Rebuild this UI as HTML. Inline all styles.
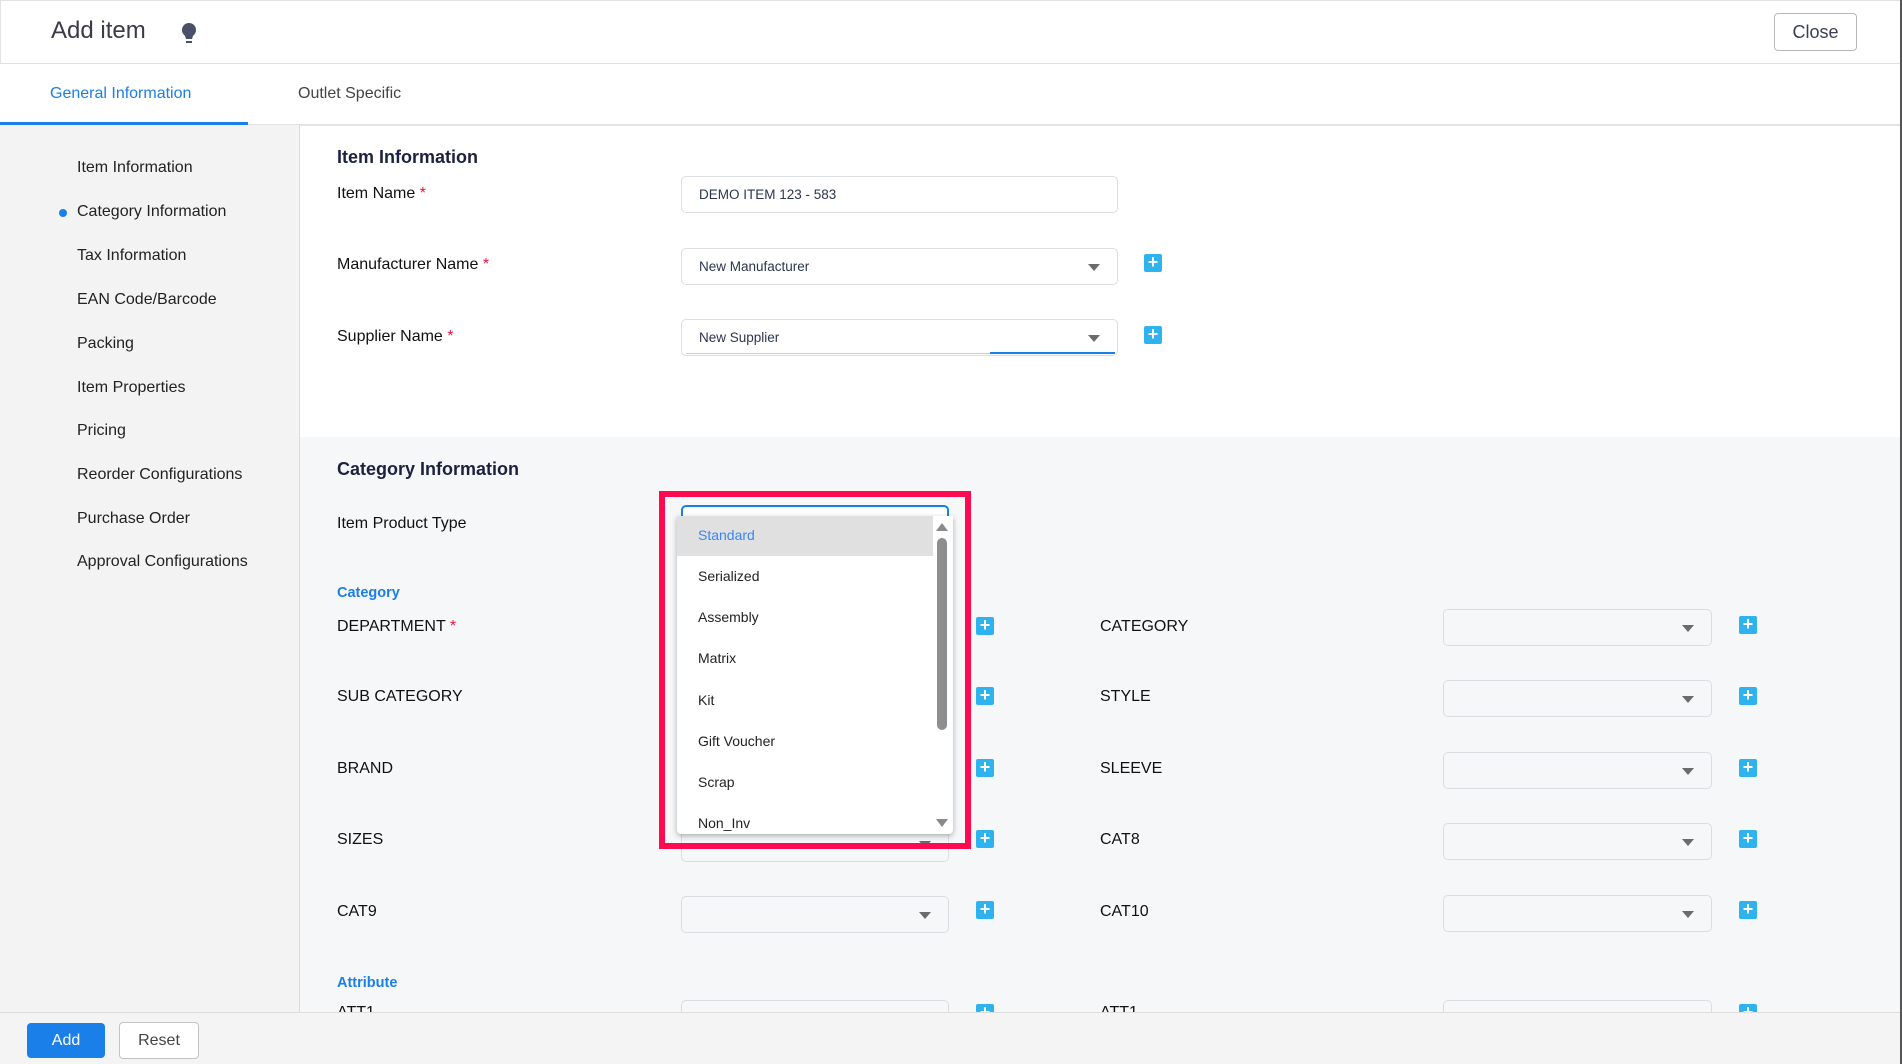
<!DOCTYPE html>
<html><head><meta charset="utf-8"><style>
*{margin:0;padding:0;box-sizing:border-box}
body{width:1902px;height:1064px;position:relative;overflow:hidden;background:#fff;font-family:"Liberation Sans",Arial,sans-serif;color:#1d1d2b}
.a{position:absolute}
.side{left:0;top:125px;width:300px;height:888px;background:#f3f3f3;border-right:1px solid #dcdcdc}
.side div{position:absolute;left:77px;font-size:16px;color:#222}
.lbl{position:absolute;left:337px;font-size:16px;color:#111}
.star{color:#e8143c}
.inp{position:absolute;background:#fff;border:1px solid #dcdde0;border-radius:5px;height:37px;font-size:13.5px;color:#2c3550;padding-left:17px;line-height:35px}
.sel{position:absolute;border:1px solid #dcdde0;border-radius:5px;height:37px;background:#f6f7f9}
.sel:after,.inp.dd:after{content:"";position:absolute;right:17px;top:15px;border-left:6px solid transparent;border-right:6px solid transparent;border-top:7px solid #6b6b6b}
.plus{position:absolute;width:18px;height:18px;background:#2fb3ee;border-radius:2px;color:#fff;font-size:18px;line-height:17px;text-align:center;font-weight:bold}
.rl{position:absolute;left:1100px;font-size:16px;color:#111}
.opt{position:absolute;left:21px;font-size:14px;color:#222}
</style></head><body>
<div class="a" style="left:0;top:0;width:1902px;height:64px;border:1px solid #e3e3e3;border-bottom:1px solid #e0e0e0"></div>
<div class="a" style="left:51px;top:17px;font-size:24px;color:#3a3a48">Add item</div>
<svg class="a" style="left:180px;top:22px" width="18" height="24" viewBox="0 0 18 24"><circle cx="9" cy="8" r="7" fill="#4a5068"/><path d="M4 11 L6 17 H12 L14 11Z" fill="#4a5068"/><rect x="6" y="19" width="6" height="2" fill="#4a5068"/></svg>
<div class="a" style="left:1774px;top:13px;width:83px;height:38px;border:1px solid #b9b9b9;border-radius:4px;font-size:18px;color:#3a3f55;text-align:center;line-height:36px">Close</div>
<div class="a" style="left:1900px;top:0;width:2px;height:1064px;background:#555"></div>
<div class="a" style="left:0;top:124px;width:1900px;height:2px;background:#e3e3e3"></div>
<div class="a" style="left:50px;top:85px;font-size:16px;color:#1a7fe8">General Information</div>
<div class="a" style="left:298px;top:85px;font-size:16px;color:#444">Outlet Specific</div>
<div class="a" style="left:0;top:122px;width:248px;height:3px;background:#1a7fe8"></div>
<div class="a side">
<div style="top:34px">Item Information</div>
<div style="top:78px">Category Information</div>
<div style="top:122px">Tax Information</div>
<div style="top:166px">EAN Code/Barcode</div>
<div style="top:210px">Packing</div>
<div style="top:254px">Item Properties</div>
<div style="top:297px">Pricing</div>
<div style="top:341px">Reorder Configurations</div>
<div style="top:385px">Purchase Order</div>
<div style="top:428px">Approval Configurations</div>
<span style="position:absolute;left:59px;top:84px;width:8px;height:8px;border-radius:50%;background:#1a7fe8"></span>
</div>
<div class="a" style="left:300px;top:437px;width:1600px;height:576px;background:#f6f7f9"></div>
<div class="a" style="left:337px;top:147px;font-size:18px;font-weight:bold;color:#1c2140">Item Information</div>
<div class="lbl" style="top:185px">Item Name <span class="star">*</span></div>
<div class="lbl" style="top:256px">Manufacturer Name <span class="star">*</span></div>
<div class="lbl" style="top:328px">Supplier Name <span class="star">*</span></div>
<div class="inp" style="left:681px;top:176px;width:437px">DEMO ITEM 123 - 583</div>
<div class="inp dd" style="left:681px;top:248px;width:437px">New Manufacturer</div>
<div class="inp dd" style="left:681px;top:319px;width:437px">New Supplier<span style="position:absolute;left:4px;right:2px;bottom:1px;height:1px;background:#a8d8f5"></span><span style="position:absolute;left:308px;right:2px;bottom:1px;height:2px;background:#1a7fe8"></span></div>
<div class="plus" style="left:1144px;top:254px">+</div>
<div class="plus" style="left:1144px;top:326px">+</div>
<div class="a" style="left:337px;top:459px;font-size:18px;font-weight:bold;color:#1c2140">Category Information</div>
<div class="lbl" style="top:515px">Item Product Type</div>
<div class="a" style="left:337px;top:585px;font-size:14.5px;font-weight:bold;color:#1a7fe8">Category</div>
<div class="lbl" style="top:618px">DEPARTMENT <span class="star">*</span></div>
<div class="lbl" style="top:688px">SUB CATEGORY</div>
<div class="lbl" style="top:760px">BRAND</div>
<div class="lbl" style="top:831px">SIZES</div>
<div class="lbl" style="top:903px">CAT9</div>
<div class="sel" style="left:681px;top:825px;width:268px"></div>
<div class="sel" style="left:681px;top:896px;width:268px"></div>
<div class="plus" style="left:976px;top:617px">+</div>
<div class="plus" style="left:976px;top:687px">+</div>
<div class="plus" style="left:976px;top:759px">+</div>
<div class="plus" style="left:976px;top:830px">+</div>
<div class="plus" style="left:976px;top:901px">+</div>
<div class="rl" style="top:618px">CATEGORY</div>
<div class="rl" style="top:688px">STYLE</div>
<div class="rl" style="top:760px">SLEEVE</div>
<div class="rl" style="top:831px">CAT8</div>
<div class="rl" style="top:903px">CAT10</div>
<div class="sel" style="left:1443px;top:609px;width:269px"></div>
<div class="sel" style="left:1443px;top:680px;width:269px"></div>
<div class="sel" style="left:1443px;top:752px;width:269px"></div>
<div class="sel" style="left:1443px;top:823px;width:269px"></div>
<div class="sel" style="left:1443px;top:895px;width:269px"></div>
<div class="plus" style="left:1739px;top:616px">+</div>
<div class="plus" style="left:1739px;top:687px">+</div>
<div class="plus" style="left:1739px;top:759px">+</div>
<div class="plus" style="left:1739px;top:830px">+</div>
<div class="plus" style="left:1739px;top:901px">+</div>
<div class="a" style="left:337px;top:975px;font-size:14.5px;font-weight:bold;color:#1a7fe8">Attribute</div>
<div class="lbl" style="top:1004px">ATT1</div>
<div class="rl" style="top:1004px">ATT1</div>
<div class="sel" style="left:681px;top:1000px;width:268px"></div>
<div class="sel" style="left:1443px;top:1000px;width:269px"></div>
<div class="plus" style="left:976px;top:1004px">+</div>
<div class="plus" style="left:1739px;top:1004px">+</div>
<div class="a" style="left:681px;top:505px;width:268px;height:30px;border:2px solid #1a7fe8;border-bottom:none;border-radius:5px 5px 0 0;background:#fff"></div>
<div class="a" style="left:677px;top:516px;width:276px;height:318px;background:#fff;box-shadow:0 2px 6px rgba(0,0,0,.3);border-radius:0 0 4px 4px;overflow:hidden">
<div class="a" style="left:0;top:0;width:256px;height:40px;background:#e0e0e0"></div>
<div class="opt" style="top:11px;color:#3b87f0">Standard</div>
<div class="opt" style="top:52px">Serialized</div>
<div class="opt" style="top:93px">Assembly</div>
<div class="opt" style="top:134px">Matrix</div>
<div class="opt" style="top:176px">Kit</div>
<div class="opt" style="top:217px">Gift Voucher</div>
<div class="opt" style="top:258px">Scrap</div>
<div class="opt" style="top:299px">Non_Inv</div>
<div class="a" style="left:259px;top:7px;border-left:6px solid transparent;border-right:6px solid transparent;border-bottom:8px solid #8a8a8a"></div>
<div class="a" style="left:260px;top:22px;width:10px;height:192px;border-radius:5px;background:#8e8e8e"></div>
<div class="a" style="left:259px;top:303px;border-left:6px solid transparent;border-right:6px solid transparent;border-top:8px solid #8a8a8a"></div>
</div>
<div class="a" style="left:659px;top:491px;width:312px;height:358px;border:6px solid #ff0a50"></div>
<div class="a" style="left:0;top:1012px;width:1900px;height:52px;background:#f4f4f4;border-top:1px solid #dedede"></div>
<div class="a" style="left:27px;top:1023px;width:78px;height:35px;background:#1a7fe8;border-radius:4px;color:#fff;font-size:16px;text-align:center;line-height:35px">Add</div>
<div class="a" style="left:119px;top:1022px;width:80px;height:37px;background:#fff;border:1px solid #c4c4c4;border-radius:4px;color:#444;font-size:16px;text-align:center;line-height:35px">Reset</div>
</body></html>
